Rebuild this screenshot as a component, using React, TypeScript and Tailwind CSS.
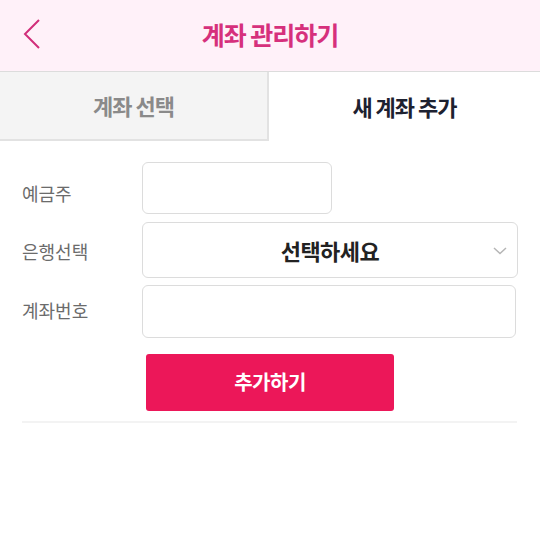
import React, { useState } from "react";

const font = { fontFamily: '"Noto Sans CJK KR", "Noto Sans", sans-serif' };

export default function App() {
  const [owner, setOwner] = useState("");
  const [bank, setBank] = useState("");
  const [accountNo, setAccountNo] = useState("");

  return (
    <div className="w-[540px] h-[557px] bg-white" style={font}>
      {/* header */}
      <div className="relative h-[72px] bg-[#fff1f9] border-b border-[#dcdcdc] flex items-center justify-center">
        <button className="absolute left-[20px] top-[17px] w-[24px] h-[34px] flex items-center justify-center">
          <svg width="20" height="32" viewBox="0 0 20 32" fill="none">
            <path d="M17 2 L3 16 L17 30" stroke="#d12e7a" strokeWidth="2" />
          </svg>
        </button>
        <h1 className="text-[25px] font-bold text-[#d6307c] tracking-[-1px] -mt-[2px]">계좌 관리하기</h1>
      </div>

      {/* tabs */}
      <div className="flex h-[69px]">
        <div className="w-[269px] bg-[#f4f4f4] border-r-2 border-b-2 border-[#e2e2e2] flex items-center justify-center">
          <span className="text-[22px] font-bold text-[#8a8a8a] tracking-[-1px]">계좌 선택</span>
        </div>
        <div className="flex-1 flex items-center justify-center">
          <span className="text-[22px] font-bold text-[#1d2130] tracking-[-1px]">새 계좌 추가</span>
        </div>
      </div>

      {/* form */}
      <div className="px-[22px] pt-[21px]">
        <div className="flex items-center">
          <label className="w-[120px] text-[18px] text-[#6b6b6b] pt-[10px]">예금주</label>
          <input
            className="w-[190px] h-[52px] border border-[#dcdcdc] rounded-[6px] px-3 outline-none"
            value={owner}
            onChange={e => setOwner(e.target.value)}
          />
        </div>

        <div className="flex items-center mt-[8px]">
          <label className="w-[120px] text-[18px] text-[#6b6b6b] pt-[2px]">은행선택</label>
          <div className="relative w-[376px] h-[56px] border border-[#dcdcdc] rounded-[6px] flex items-center justify-center">
            <span className="text-[22px] font-bold text-[#222] tracking-[-0.5px]">{bank || "선택하세요"}</span>
            <svg className="absolute right-[10px] top-[24px]" width="14" height="8" viewBox="0 0 14 8" fill="none">
              <path d="M1 1 L7 6.5 L13 1" stroke="#b5b5b5" strokeWidth="1.5" />
            </svg>
            <select
              className="absolute inset-0 opacity-0"
              value={bank}
              onChange={e => setBank(e.target.value)}
            >
              <option value="">선택하세요</option>
            </select>
          </div>
        </div>

        <div className="flex items-center mt-[7px]">
          <label className="w-[120px] text-[18px] text-[#6b6b6b] -mt-[2px]">계좌번호</label>
          <input
            className="w-[374px] h-[53px] border border-[#dcdcdc] rounded-[6px] px-3 outline-none"
            value={accountNo}
            onChange={e => setAccountNo(e.target.value)}
          />
        </div>

        <div className="pl-[124px] mt-[16px]">
          <button className="w-[248px] h-[57px] bg-[#ec1759] rounded-[3px] text-white text-[20px] font-bold tracking-[-0.5px] pb-[2px]">
            추가하기
          </button>
        </div>

        <hr className="mt-[10px] border-t-2 border-[#f3f3f3] w-[495px]" />
      </div>
    </div>
  );
}
